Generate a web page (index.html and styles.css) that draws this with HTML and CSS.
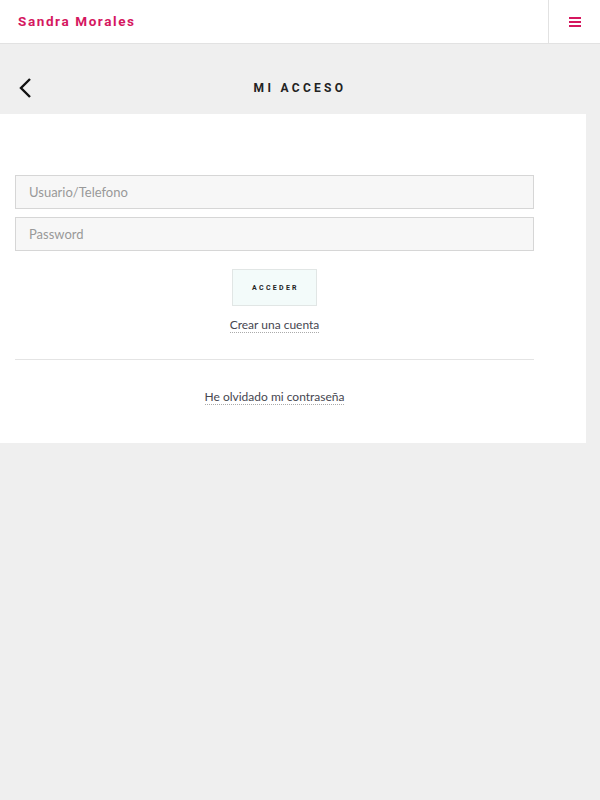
FILE: index.html
```html
<!DOCTYPE html>
<html lang="es">
<head>
<meta charset="utf-8">
<title>Mi acceso</title>
<link rel="stylesheet" href="styles.css">
</head>
<body>
<header class="topbar">
  <div class="brand">Sandra Morales</div>
  <button class="menu" aria-label="Menú">
    <svg width="12" height="10" viewBox="0 0 12 10"><rect x="0" y="0" width="12" height="2" fill="#d5175f"/><rect x="0" y="4" width="12" height="2" fill="#d5175f"/><rect x="0" y="8" width="12" height="2" fill="#d5175f"/></svg>
  </button>
</header>
<div class="titlebar">
  <a class="back" href="#" aria-label="Volver">
    <svg width="14" height="22" viewBox="0 0 14 22"><path d="M12 2 L3 11 L12 20" fill="none" stroke="#111" stroke-width="2.4"/></svg>
  </a>
  <h1>MI ACCESO</h1>
</div>
<main class="card">
  <form class="form">
    <input class="field" type="text" placeholder="Usuario/Telefono">
    <input class="field" type="password" placeholder="Password">
    <button class="btn" type="button">ACCEDER</button>
    <a class="link" href="#">Crear una cuenta</a>
  </form>
  <hr class="sep">
  <div class="forgot"><a class="link" href="#">He olvidado mi contraseña</a></div>
</main>
</body>
</html>
```
FILE: styles.css
```css
* { box-sizing: border-box; }
html, body { margin: 0; padding: 0; }
body { background: #efefef; font-family: Lato, "Open Sans", sans-serif; height: 800px; }
.topbar { height: 44px; background: #fff; border-bottom: 1px solid #e2e2e2; display: flex; align-items: center; justify-content: space-between; }
.brand { padding-left: 18px; padding-bottom: 2px; color: #d5175f; font-family: Roboto, sans-serif; font-weight: 700; font-size: 13.5px; letter-spacing: 1.6px; }
.menu { width: 52px; height: 43px; border: 0; border-left: 1px solid #e2e2e2; background: #fff; display: flex; align-items: center; justify-content: center; padding: 0; }
.titlebar { height: 70px; display: flex; align-items: center; justify-content: center; position: relative; }
.back { position: absolute; left: 18px; top: 33px; display: block; line-height: 0; }
.titlebar h1 { margin: 0; font-family: Roboto, sans-serif; font-size: 12px; font-weight: 700; letter-spacing: 3.3px; color: #222; margin-top: 17px; }
.card { background: #fff; width: 586px; height: 329px; padding: 61px 52px 0 15px; }
.form { display: flex; flex-direction: column; align-items: center; }
.field { width: 100%; height: 34px; border: 1px solid #d6d6d6; background: #f7f7f7; font-family: Lato, sans-serif; font-size: 13px; padding: 0 13px; color: #333; margin-bottom: 8px; outline: none; }
.field::placeholder { color: #999; }
.btn { margin-top: 10px; width: 85px; height: 37px; background: #f3fbfa; border: 1px solid #e1e6e5; font-family: Roboto, sans-serif; font-size: 7px; font-weight: 700; letter-spacing: 2.3px; color: #222; padding: 0 0 0 2px; }
.link { margin-top: 11px; font-size: 12px; color: #464650; text-decoration: none; border-bottom: 1px dotted #aaa; line-height: 15px; font-family: Lato, sans-serif; }
.sep { border: 0; border-top: 1px solid #e4e4e4; margin: 26px 0 0; }
.forgot { text-align: center; margin-top: 25px; }
.forgot .link { margin: 0; }
```
